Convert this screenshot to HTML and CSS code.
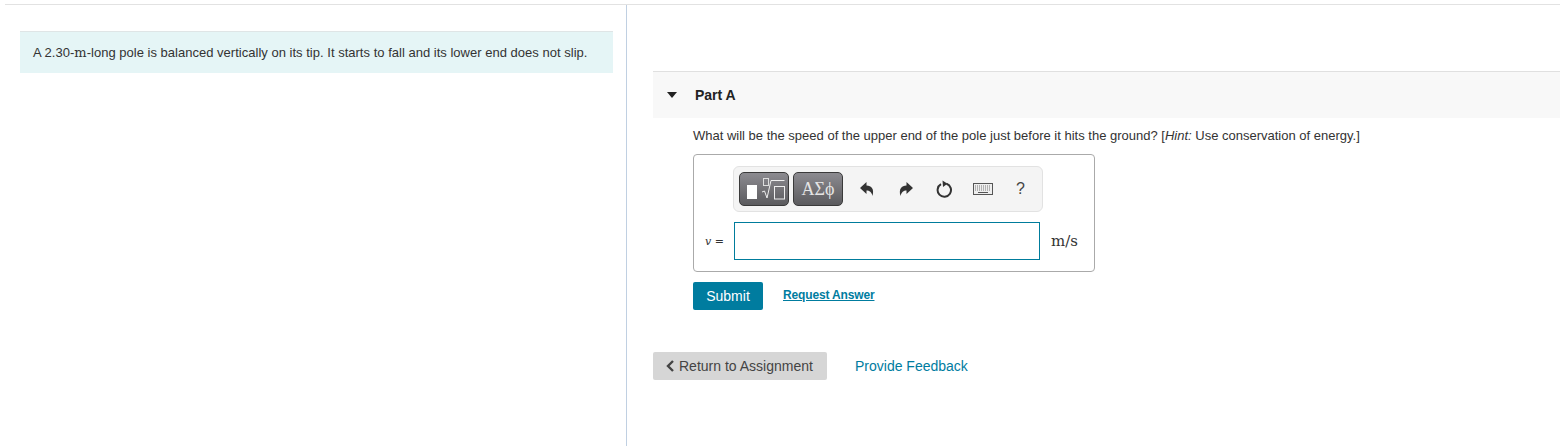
FILE: index.html
```html
<!DOCTYPE html>
<html lang="en">
<head>
    <meta charset="UTF-8">
    <title>Part A</title>
    <link rel="stylesheet" href="styles.css">
</head>
<body>
    <div class="page">
        <!-- Problem statement -->
        <div class="left-col">
            <div class="intro">A 2.30-<span class="unit">m</span>-long pole is balanced vertically on its tip. It starts to fall and its lower end does not slip.</div>
        </div>

        <div class="right-col">
            <div class="part-header">
                <span class="caret"></span>
                <span class="part-title">Part A</span>
            </div>

            <div class="part-body">
                <p class="question">What will be the speed of the upper end of the pole just before it hits the ground? [<em>Hint:</em> Use conservation of energy.]</p>

                <div class="answer-box">
                    <div class="toolbar">
                        <button class="tool-btn tool-templates" type="button" aria-label="Templates">
                            <svg width="48" height="32" viewBox="0 0 48 32">
                                <rect x="7" y="12" width="10" height="14" fill="#fff"/>
                                <rect x="23.5" y="5.5" width="5" height="7" fill="none" stroke="#ddd"/>
                                <path d="M22 19 L24.5 18 L27 25 L31 7.5 H44.5" fill="none" stroke="#eee"/>
                                <rect x="34.5" y="13.5" width="10" height="12.5" fill="none" stroke="#eee"/>
                            </svg>
                        </button>
                        <button class="tool-btn tool-symbols" type="button">ΑΣϕ</button>
                        <div class="tool-icons">
                            <svg class="tool-icon" width="16" height="16" viewBox="0 0 16 16">
                                <path d="M1 7 L7.5 1 V4.5 C12.5 4.5 15.5 8 13.5 15 C12.5 11 10.5 9.5 7.5 9.5 V13 Z" fill="#333"/>
                            </svg>
                            <svg class="tool-icon" width="16" height="16" viewBox="0 0 16 16">
                                <path d="M15 7 L8.5 1 V4.5 C3.5 4.5 0.5 8 2.5 15 C3.5 11 5.5 9.5 8.5 9.5 V13 Z" fill="#333"/>
                            </svg>
                            <svg class="tool-icon" width="18" height="18" viewBox="0 0 18 18">
                                <path d="M6 4.2 A6.7 6.7 0 1 0 11.5 3.7" fill="none" stroke="#333" stroke-width="2"/>
                                <path d="M7.5 0.5 L12.5 3.8 L8 7 Z" fill="#333"/>
                            </svg>
                            <svg class="tool-icon" width="20" height="12" viewBox="0 0 20 12">
                                <rect x="0.5" y="0.5" width="19" height="11" fill="#eee" stroke="#555"/>
                                <path d="M2 3 H18 M2 5 H18 M2 7 H18" stroke="#777" stroke-dasharray="1 1"/>
                                <path d="M5 9.5 H15" stroke="#555"/>
                            </svg>
                            <span class="tool-help">?</span>
                        </div>
                    </div>
                    <div class="answer-row">
                        <span class="var-label"><i>v</i> =</span>
                        <div class="answer-input"></div>
                        <span class="answer-unit">m/s</span>
                    </div>
                </div>

                <div class="actions">
                    <button class="submit-btn" type="button">Submit</button>
                    <a class="request-link" href="#">Request Answer</a>
                </div>
            </div>

            <div class="footer-links">
                <a class="return-btn" href="#">
                    <svg width="9" height="12" viewBox="0 0 9 12"><path d="M7 1 L2 6 L7 11" fill="none" stroke="#444" stroke-width="2.4"/></svg>
                    Return to Assignment
                </a>
                <a class="feedback-link" href="#">Provide Feedback</a>
            </div>
        </div>
    </div>
</body>
</html>
```

FILE: styles.css
```css
html, body {
    margin: 0;
    padding: 0;
    height: 446px;
    overflow: hidden;
    background-color: #fff;
}

body {
    font-family: "Liberation Sans", Arial, sans-serif;
    color: #333;
    padding-top: 4px;
    box-sizing: border-box;
}

.page {
    display: flex;
    height: 442px;
    margin-left: 5px;
    border-top: 1px solid #e2e2e2;
}

.left-col {
    width: 622px;
    padding: 26px 13px 0 15px;
    box-sizing: border-box;
    border-right: 1px solid #c0d0e2;
    flex: none;
}

.intro {
    height: 42px;
    padding-left: 13px;
    box-sizing: border-box;
    line-height: 41px;
    font-size: 13px;
    letter-spacing: 0.015px;
    background-color: #e5f5f6;
    border-top: 1px solid #dfe5e6;
}

.unit {
    font-family: "DejaVu Serif", serif;
    font-size: 13px;
}

.right-col {
    flex: 1;
    padding: 66px 0 0 26px;
}

.part-header {
    display: flex;
    align-items: center;
    height: 46px;
    background-color: #f8f8f8;
    border-top: 1px solid #e0e0e0;
}

.caret {
    width: 0;
    height: 0;
    margin-left: 14px;
    border-left: 5.5px solid transparent;
    border-right: 5.5px solid transparent;
    border-top: 6px solid #222;
}

.part-title {
    margin-left: 18px;
    font-size: 14px;
    font-weight: bold;
    color: #222;
}

.part-body {
    padding-left: 40px;
}

.question {
    margin: 10px 0 11px;
    font-size: 13px;
    line-height: 15px;
}

.answer-box {
    width: 402px;
    height: 118px;
    box-sizing: border-box;
    border: 1px solid #aaa;
    border-radius: 4px;
    padding: 11px 0 0 11px;
}

.toolbar {
    display: flex;
    align-items: center;
    width: 310px;
    height: 46px;
    margin-left: 28px;
    padding-left: 5px;
    box-sizing: border-box;
    background-color: #f4f4f4;
    border: 1px solid #e2e2e2;
    border-radius: 6px;
}

.tool-btn {
    height: 34px;
    width: 50px;
    padding: 0;
    margin-right: 4px;
    color: #fff;
    background: linear-gradient(#8c8b90, #5b5b5e);
    border: 1px solid #3a3a3a;
    border-radius: 5px;
}

.tool-templates svg {
    display: block;
}

.tool-symbols {
    font-family: "Liberation Serif", serif;
    font-size: 18px;
    color: #e4e4e4;
}

.tool-icons {
    display: flex;
    align-items: center;
    margin-left: 12px;
}

.tool-icon {
    flex: none;
}

.tool-icons .tool-icon:nth-child(2) { margin-left: 23px; }
.tool-icons .tool-icon:nth-child(3) { margin-left: 21px; }
.tool-icons .tool-icon:nth-child(4) { margin-left: 20px; }

.tool-help {
    margin-left: 23px;
    font-size: 16px;
    color: #444;
}

.answer-row {
    display: flex;
    align-items: center;
    margin-top: 10px;
}

.var-label {
    width: 29px;
    font-family: "DejaVu Serif", serif;
    font-size: 11px;
    box-sizing: border-box;
}

.answer-input {
    width: 306px;
    height: 38px;
    box-sizing: border-box;
    border: 1px solid #007c9c;
}

.answer-unit {
    margin-left: 11px;
    font-family: "DejaVu Serif", serif;
    font-size: 15px;
}

.actions {
    display: flex;
    align-items: center;
    margin-top: 10px;
}

.submit-btn {
    width: 70px;
    height: 28px;
    padding: 0;
    font-family: inherit;
    font-size: 14px;
    color: #fff;
    background-color: #007c9f;
    border: none;
    border-radius: 2px;
}

.request-link {
    margin: -3px 0 0 20px;
    font-size: 12px;
    font-weight: bold;
    letter-spacing: -0.15px;
    color: #007c9f;
}

.footer-links {
    display: flex;
    align-items: center;
    margin-top: 42px;
}

.return-btn {
    display: flex;
    align-items: center;
    gap: 4px;
    width: 174px;
    height: 28px;
    padding-left: 13px;
    box-sizing: border-box;
    font-size: 14px;
    color: #444;
    text-decoration: none;
    background-color: #d6d6d6;
    border-radius: 2px;
}

.feedback-link {
    margin-left: 28px;
    font-size: 14px;
    color: #007c9f;
    text-decoration: none;
}
```
